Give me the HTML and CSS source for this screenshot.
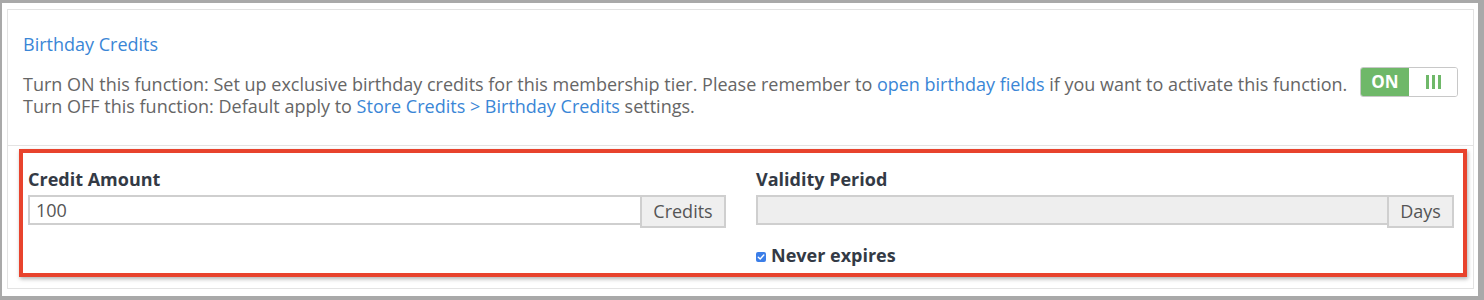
FILE: index.html
```html
<!DOCTYPE html>
<html>
<head>
<meta charset="utf-8">
<link rel="stylesheet" href="styles.css">
</head>
<body>
<div class="frame">
  <div class="panel">
    <div class="section intro">
      <a class="title" href="#">Birthday Credits</a>
      <div class="row">
        <div class="desc">
          <div>Turn ON this function: Set up exclusive birthday credits for this membership tier. Please remember to <a href="#">open birthday fields</a> if you want to activate this function.</div>
          <div>Turn OFF this function: Default apply to <a href="#">Store Credits &gt; Birthday Credits</a> settings.</div>
        </div>
        <div class="toggle">
          <span class="on">ON</span>
          <span class="handle"><i></i><i></i><i></i></span>
        </div>
      </div>
    </div>
    <div class="section form">
      <div class="highlight">
        <div class="col">
          <div class="label">Credit Amount</div>
          <div class="group">
            <div class="field">100</div>
            <div class="addon credits">Credits</div>
          </div>
        </div>
        <div class="col">
          <div class="label">Validity Period</div>
          <div class="group">
            <div class="field disabled"></div>
            <div class="addon days">Days</div>
          </div>
          <div class="check">
            <span class="box"><svg width="10" height="10" viewBox="0 0 10 10"><path d="M2.3 5.2 L4.2 7 L7.8 3" fill="none" stroke="#fff" stroke-width="1.4" stroke-linecap="round" stroke-linejoin="round"/></svg></span>
            <span class="label">Never expires</span>
          </div>
        </div>
      </div>
    </div>
  </div>
</div>
</body>
</html>
```

FILE: styles.css
```css
html, body {
  margin: 0;
  padding: 0;
}
body {
  background: #a9a9a9;
  font-family: "Open Sans", "Liberation Sans", sans-serif;
  height: 300px;
  overflow: hidden;
}
.frame {
  margin: 3px 6px 0 2px;
  height: 293px;
  background: #fff;
  box-sizing: border-box;
  padding: 6px 4px 0 5px;
}
.panel {
  border: 1px solid #e3e3e3;
  height: 280px;
  box-sizing: border-box;
}
.section {
  box-sizing: border-box;
}
.intro {
  height: 136px;
  padding: 23px 15px 0 15px;
  border-bottom: 1px solid #e3e3e3;
}
.title {
  display: block;
  font-size: 18px;
  line-height: 22px;
  color: #3a86d6;
  text-decoration: none;
  margin-bottom: 12px;
}
.row {
  display: flex;
  justify-content: space-between;
  align-items: flex-start;
}
.desc {
  padding-top: 6px;
  font-size: 18px;
  line-height: 22px;
  color: #666;
}
.desc a {
  color: #3a86d6;
  text-decoration: none;
}
.toggle {
  display: flex;
  flex: none;
  width: 98px;
  height: 30px;
  box-sizing: border-box;
  border: 1px solid #c8c8c8;
  border-radius: 3px;
  overflow: hidden;
}
.toggle .on {
  width: 48px;
  background: #6fb869;
  color: #fff;
  font-weight: 700;
  font-size: 17px;
  line-height: 28px;
  text-align: center;
}
.toggle .handle {
  flex: 1;
  display: flex;
  justify-content: center;
  align-items: center;
  gap: 3px;
  background: #fff;
}
.toggle .handle i {
  display: block;
  width: 3px;
  height: 14px;
  background: #6fb869;
}
.form {
  padding: 3px 6px 12px 11px;
}
.highlight {
  border: 4px solid #e8432d;
  box-shadow: 1px 2px 4px rgba(0,0,0,0.3);
  height: 128px;
  box-sizing: border-box;
  padding: 15px 9px 0 5px;
  display: grid;
  grid-template-columns: 1fr 1fr;
  column-gap: 30px;
}
.label {
  font-weight: 700;
  font-size: 18px;
  line-height: 22px;
  color: #333a45;
}
.group {
  display: flex;
  align-items: flex-start;
  margin-top: 5px;
}
.field {
  flex: 1;
  height: 30px;
  box-sizing: border-box;
  border: 2px solid #cfcfcf;
  border-right: 0;
  font-size: 18px;
  line-height: 26px;
  color: #555;
  padding-left: 6px;
}
.field.disabled {
  background: #eeeeee;
}
.addon {
  flex: none;
  height: 33px;
  box-sizing: border-box;
  border: 2px solid #cfcfcf;
  background: #efefef;
  font-size: 18px;
  line-height: 29px;
  color: #555;
  text-align: center;
}
.addon.credits {
  width: 86px;
}
.addon.days {
  width: 67px;
}
.check {
  display: flex;
  align-items: center;
  margin-top: 16px;
  gap: 5px;
}
.box {
  width: 10px;
  height: 10px;
  border-radius: 2px;
  background: #3b7ee8;
  display: block;
  margin-top: 4px;
}
.box svg {
  display: block;
}
```
